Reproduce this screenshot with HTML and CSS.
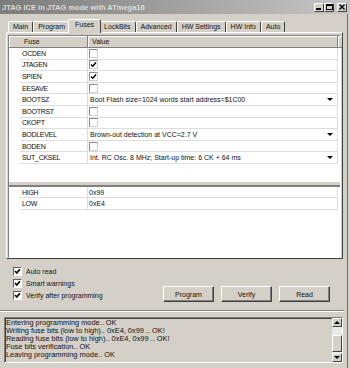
FILE: index.html
```html
<!DOCTYPE html>
<html lang="en">
<head>
    <meta charset="UTF-8">
    <meta name="viewport" content="width=device-width, initial-scale=1.0">
    <link rel="stylesheet" href="styles.css">
</head>
<body>
    <div class="window">
        <div class="titlebar">
            <span class="title">JTAG ICE in JTAG mode with ATmega16</span>
            <div class="title-buttons">
                <span class="tbtn"><svg width="6" height="6" viewBox="0 0 6 6"><rect x="0" y="4" width="5" height="2" fill="#000"/></svg></span>
                <span class="tbtn"><svg width="7" height="6" viewBox="0 0 7 6"><rect x="0.5" y="0.5" width="6" height="5" fill="none" stroke="#000"/><rect x="0" y="0" width="7" height="2" fill="#000"/></svg></span>
                <span class="tbtn close"><svg width="6" height="6" viewBox="0 0 6 6"><path d="M0.5 0.5 L5.5 5.5 M5.5 0.5 L0.5 5.5" stroke="#000" stroke-width="1.4"/></svg></span>
            </div>
        </div>

        <div class="tabs">
            <div class="tab">Main</div>
            <div class="tab">Program</div>
            <div class="tab active">Fuses</div>
            <div class="tab">LockBits</div>
            <div class="tab">Advanced</div>
            <div class="tab">HW Settings</div>
            <div class="tab">HW Info</div>
            <div class="tab">Auto</div>
        </div>

        <div class="page">
            <div class="grid-box">
                <div class="upper">
                    <div class="grid-header">
                        <div class="head-cell head-fuse">Fuse</div>
                        <div class="head-cell">Value</div>
                        <div class="head-cell head-rest"></div>
                    </div>
                    <div class="row"><span></span><div class="name">OCDEN</div><div class="value"><span class="cb"></span></div></div>
                    <div class="row"><span></span><div class="name">JTAGEN</div><div class="value"><span class="cb checked"><svg width="7" height="7" viewBox="0 0 7 7"><path d="M1 3.5 L2.8 5.3 L6 1.5" fill="none" stroke="#000" stroke-width="1.4"/></svg></span></div></div>
                    <div class="row"><span></span><div class="name">SPIEN</div><div class="value"><span class="cb checked"><svg width="7" height="7" viewBox="0 0 7 7"><path d="M1 3.5 L2.8 5.3 L6 1.5" fill="none" stroke="#000" stroke-width="1.4"/></svg></span></div></div>
                    <div class="row"><span></span><div class="name">EESAVE</div><div class="value"><span class="cb"></span></div></div>
                    <div class="row"><span></span><div class="name">BOOTSZ</div><div class="value select">Boot Flash size=1024 words start address=$1C00<span class="arrow"></span></div></div>
                    <div class="row"><span></span><div class="name">BOOTRST</div><div class="value"><span class="cb"></span></div></div>
                    <div class="row"><span></span><div class="name">CKOPT</div><div class="value"><span class="cb"></span></div></div>
                    <div class="row"><span></span><div class="name">BODLEVEL</div><div class="value select">Brown-out detection at VCC=2.7 V<span class="arrow"></span></div></div>
                    <div class="row"><span></span><div class="name">BODEN</div><div class="value"><span class="cb"></span></div></div>
                    <div class="row"><span></span><div class="name">SUT_CKSEL</div><div class="value select">Int. RC Osc. 8 MHz; Start-up time: 6 CK + 64 ms<span class="arrow"></span></div></div>
                </div>
                <div class="splitter"></div>
                <div class="lower">
                    <div class="row short"><span></span><div class="name">HIGH</div><div class="value">0x99</div></div>
                    <div class="row short"><span></span><div class="name">LOW</div><div class="value">0xE4</div></div>
                </div>
            </div>
        </div>

        <div class="options">
            <div class="checks">
                <label class="check-row"><span class="box"><svg width="7" height="7" viewBox="0 0 7 7"><path d="M1 3 L2.8 5 L6 1.2" fill="none" stroke="#000" stroke-width="1.6"/></svg></span>Auto read</label>
                <label class="check-row"><span class="box"><svg width="7" height="7" viewBox="0 0 7 7"><path d="M1 3 L2.8 5 L6 1.2" fill="none" stroke="#000" stroke-width="1.6"/></svg></span>Smart warnings</label>
                <label class="check-row"><span class="box"><svg width="7" height="7" viewBox="0 0 7 7"><path d="M1 3 L2.8 5 L6 1.2" fill="none" stroke="#000" stroke-width="1.6"/></svg></span>Verify after programming</label>
            </div>
            <div class="actions">
                <button type="button" class="btn">Program</button>
                <button type="button" class="btn">Verify</button>
                <button type="button" class="btn">Read</button>
            </div>
        </div>

        <div class="separator"></div>

        <div class="log">
            <div class="log-text">
                <div>Entering programming mode.. OK</div>
                <div>Writing fuse bits (low to high).. 0xE4, 0x99 .. OK!</div>
                <div>Reading fuse bits (low to high).. 0xE4, 0x99 .. OK!</div>
                <div>Fuse bits verification.. OK</div>
                <div>Leaving programming mode.. OK</div>
            </div>
            <div class="scrollbar">
                <span class="sbtn"><span class="arrow up"></span></span>
                <div class="track"><span class="thumb"></span></div>
                <span class="sbtn"><span class="arrow"></span></span>
            </div>
        </div>
    </div>
</body>
</html>
```

FILE: styles.css
```css
* {
    box-sizing: border-box;
}

body {
    font-family: 'Liberation Sans', Arial, sans-serif;
    font-size: 7px;
    color: #111;
    margin: 0;
    padding: 0;
    background: #d4d0c8;
}

.window {
    width: 350px;
    height: 368px;
    display: flex;
    flex-direction: column;
    background: #d4d0c8;
    overflow: hidden;
    box-shadow: inset -2px 0 #d4d0c8, inset -3px 0 #707070;
}

/* title bar */
.titlebar {
    height: 14px;
    display: flex;
    align-items: center;
    justify-content: space-between;
    padding: 0 3px 0 2px;
    background: linear-gradient(to right, #7c7c7c, #c6c6c6);
}

.title {
    color: #dcdcd4;
    font-weight: bold;
    font-size: 7.5px;
}

.title-buttons {
    display: flex;
}

.tbtn {
    width: 10px;
    height: 9px;
    display: flex;
    align-items: center;
    justify-content: center;
    background: #d4d0c8;
    border: 1px solid;
    border-color: #fff #404040 #404040 #fff;
}

.tbtn.close {
    margin-left: 3px;
}

/* tabs */
.tabs {
    height: 18px;
    display: flex;
    align-items: flex-end;
    padding-left: 8px;
}

.tab {
    height: 11px;
    padding: 0 4px;
    line-height: 9px;
    border: 1px solid;
    border-bottom: none;
    border-color: #fff #404040 transparent #fff;
    border-radius: 2px 2px 0 0;
}

.tab.active {
    height: 14px;
    margin: 0 -2px -1px;
    padding: 0 6px;
    line-height: 10px;
    position: relative;
    z-index: 1;
    background: #d4d0c8;
}

.page {
    margin-left: 6px;
    width: 337px;
    height: 227px;
    padding: 2px 1px 0;
    border: 1px solid;
    border-color: #fff #404040 #404040 #fff;
}

.grid-box {
    height: 223px;
    background: #fff;
    border: 1px solid;
    border-color: #808080 #fff #fff #808080;
}

.upper {
    height: 146px;
}

.grid-header {
    height: 12px;
    display: grid;
    grid-template-columns: 79px 250px 1fr;
}

.head-cell {
    background: #d4d0c8;
    padding-left: 4px;
    line-height: 11px;
    border-right: 1px solid #808080;
    border-bottom: 1px solid #808080;
    box-shadow: inset 1px 1px #fff;
}

.head-fuse {
    padding-left: 15px;
}

.head-rest {
    border-right: none;
}

.row {
    height: 11.6px;
    display: grid;
    grid-template-columns: 11px 68px 250px;
}

.row.short {
    height: 11.3px;
}

.name,
.value {
    display: flex;
    align-items: center;
    border-bottom: 1px solid #dedede;
    border-right: 1px solid #dedede;
}

.name {
    padding-left: 2px;
    letter-spacing: -0.3px;
}

.value {
    padding-left: 1px;
}

.value.select {
    justify-content: space-between;
    padding: 0 4px 0 2px;
}

.cb {
    width: 9px;
    height: 9px;
    display: flex;
    align-items: center;
    justify-content: center;
    background: #fff;
    border: 1px solid;
    border-color: #8c8c8c #d4d0c8 #d4d0c8 #8c8c8c;
}

.arrow {
    width: 0;
    height: 0;
    border-left: 3px solid transparent;
    border-right: 3px solid transparent;
    border-top: 3px solid #000;
}

.arrow.up {
    border-top: none;
    border-bottom: 3px solid #000;
}

.splitter {
    height: 5px;
    background: #d4d0c8;
    border-bottom: 2px solid #808080;
}

/* options below the grid */
.options {
    height: 51px;
    display: flex;
}

.checks {
    padding: 6px 0 0 13px;
}

.check-row {
    height: 12px;
    display: flex;
    align-items: center;
    gap: 4px;
}

.box {
    width: 9px;
    height: 9px;
    display: flex;
    align-items: center;
    justify-content: center;
    background: #fff;
    border: 1px solid;
    border-color: #606060 #fff #fff #606060;
}

.actions {
    margin-left: auto;
    padding: 27px 20px 0 0;
    display: flex;
    gap: 7px;
}

.btn {
    width: 51px;
    height: 16px;
    padding: 0;
    font-family: inherit;
    font-size: 7px;
    color: #111;
    background: #d4d0c8;
    border: 1px solid;
    border-color: #fff #404040 #404040 #fff;
    box-shadow: inset -1px -1px #808080;
}

.separator {
    height: 2px;
    margin-right: 6px;
    border-top: 1px solid #808080;
    border-bottom: 1px solid #fff;
}

/* log */
.log {
    height: 46px;
    margin: 5px 7px 0 4px;
    display: flex;
    border: 1px solid;
    border-color: #808080 #fff #fff #808080;
    box-shadow: inset 1px 1px #404040;
}

.log-text {
    flex: 1;
    padding: 1px 0 0 1px;
    font-size: 7.4px;
    line-height: 8px;
}

.scrollbar {
    width: 10px;
    display: flex;
    flex-direction: column;
}

.sbtn {
    height: 9px;
    display: flex;
    align-items: center;
    justify-content: center;
    background: #d4d0c8;
    border: 1px solid;
    border-color: #fff #404040 #404040 #fff;
}

.track {
    flex: 1;
    padding-top: 8px;
    background: #ebe9e5;
}

.thumb {
    display: block;
    height: 17px;
    background: #d4d0c8;
    border: 1px solid;
    border-color: #fff #404040 #404040 #fff;
}
```
